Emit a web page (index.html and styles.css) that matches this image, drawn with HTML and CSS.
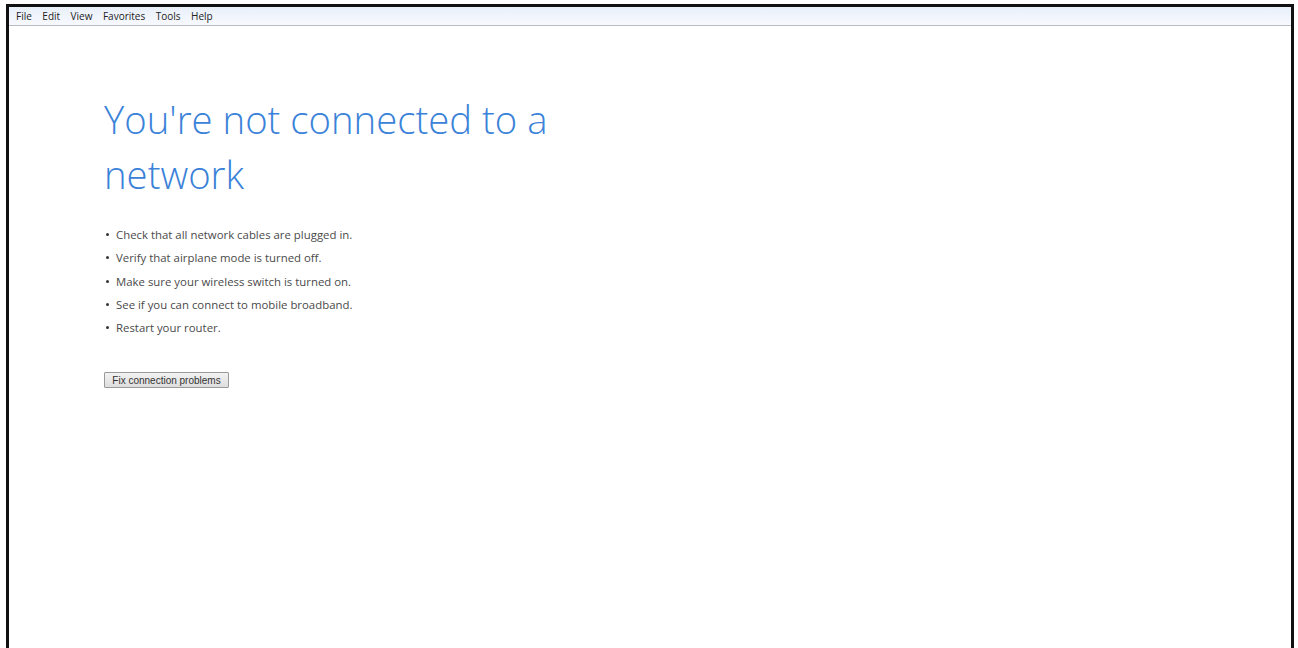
FILE: index.html
```html
<!DOCTYPE html>
<html lang="en">
<head>
<meta charset="utf-8">
<title>Cannot connect</title>
<link rel="stylesheet" href="styles.css">
</head>
<body>
<div class="window">
  <nav class="menubar">
    <span class="menu-item">File</span>
    <span class="menu-item">Edit</span>
    <span class="menu-item">View</span>
    <span class="menu-item">Favorites</span>
    <span class="menu-item">Tools</span>
    <span class="menu-item">Help</span>
  </nav>
  <main class="content">
    <h1 class="title">You're not connected to a network</h1>
    <ul class="tips">
      <li>Check that all network cables are plugged in.</li>
      <li>Verify that airplane mode is turned off.</li>
      <li>Make sure your wireless switch is turned on.</li>
      <li>See if you can connect to mobile broadband.</li>
      <li>Restart your router.</li>
    </ul>
    <button class="fix-btn" type="button">Fix connection problems</button>
  </main>
</div>
</body>
</html>
```
FILE: styles.css
```css
html, body {
  margin: 0;
  height: 100%;
  background: #ffffff;
}

.window {
  box-sizing: border-box;
  margin: 4px 4px 0 6px;
  height: calc(100% - 4px);
  border: 3px solid #111111;
  border-bottom: none;
  display: flex;
  flex-direction: column;
}

.menubar {
  height: 18px;
  display: flex;
  align-items: center;
  padding-left: 7px;
  background: linear-gradient(#e9f0fa, #f7f9fd);
  border-bottom: 1px solid #b9bcc2;
  font-family: "Open Sans", "DejaVu Sans", sans-serif;
  font-size: 10px;
  color: #222;
}

.menu-item {
  margin-right: 10.5px;
}

.content {
  flex: 1;
  padding: 66px 0 0 95px;
  font-family: "Open Sans", "Liberation Sans", sans-serif;
}

.title {
  margin: 0;
  width: 500px;
  font-weight: 300;
  font-size: 38.3px;
  line-height: 55px;
  color: #3b82d9;
}

.tips {
  list-style: none;
  margin: 21px 0 0 0;
  padding: 0;
  font-size: 11.4px;
  line-height: 23.3px;
  color: #4a4a4a;
}

.tips li {
  position: relative;
  padding-left: 12px;
}

.tips li::before {
  content: "";
  position: absolute;
  left: 2px;
  top: 10px;
  width: 3px;
  height: 3px;
  border-radius: 50%;
  background: #333;
}

.fix-btn {
  margin-top: 33px;
  height: 16px;
  width: 125px;
  padding: 0;
  font-family: "Liberation Sans", Arial, sans-serif;
  font-size: 10px;
  color: #333;
  background: linear-gradient(#f2f2f2, #dedede);
  border: 1px solid #9a9a9a;
  border-radius: 1px;
}
```
